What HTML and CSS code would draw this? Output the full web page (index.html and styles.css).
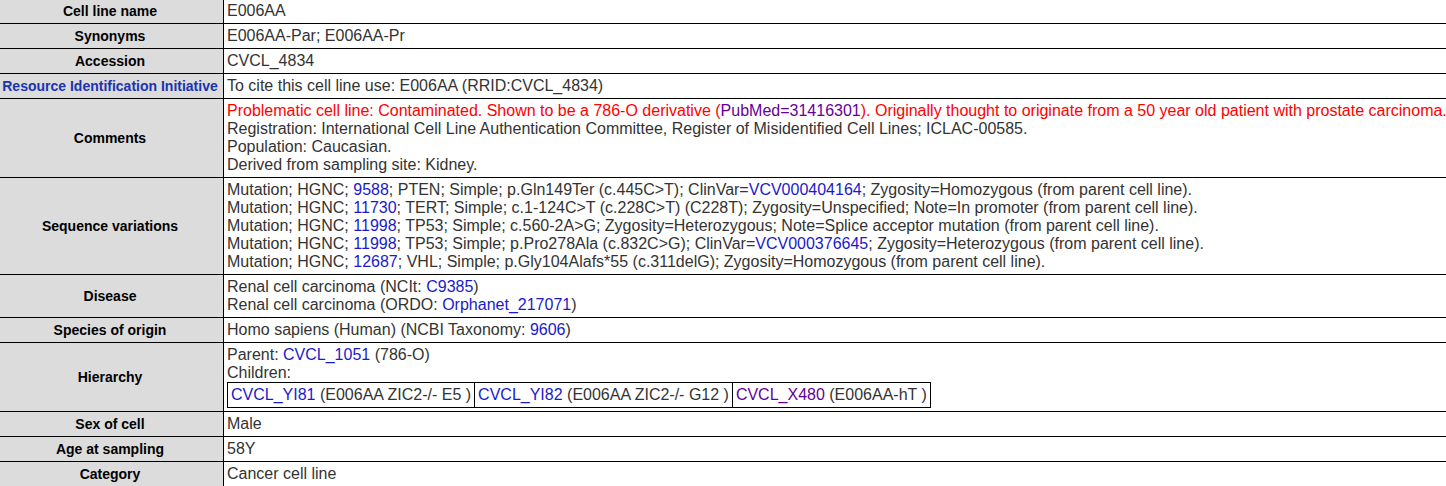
FILE: index.html
```html
<!DOCTYPE html>
<html lang="en">
<head>
  <meta charset="UTF-8">
  <title>E006AA (CVCL_4834)</title>
  <link rel="stylesheet" href="styles.css">
</head>
<body>

  <table class="entry">
    <colgroup>
      <col class="col-label">
      <col>
    </colgroup>
    <tr>
      <th>Cell line name</th>
      <td>E006AA</td>
    </tr>
    <tr>
      <th>Synonyms</th>
      <td>E006AA-Par; E006AA-Pr</td>
    </tr>
    <tr>
      <th>Accession</th>
      <td>CVCL_4834</td>
    </tr>
    <tr>
      <th><a href="#">Resource Identification Initiative</a></th>
      <td>To cite this cell line use: E006AA (RRID:CVCL_4834)</td>
    </tr>
    <tr>
      <th>Comments</th>
      <td>
        <span class="problem">Problematic cell line: Contaminated. Shown to be a 786-O derivative (<a class="visited" href="#">PubMed=31416301</a>). Originally thought to originate from a 50 year old patient with prostate carcinoma.</span><br>
        Registration: International Cell Line Authentication Committee, Register of Misidentified Cell Lines; ICLAC-00585.<br>
        Population: Caucasian.<br>
        Derived from sampling site: Kidney.
      </td>
    </tr>
    <tr>
      <th>Sequence variations</th>
      <td>
        Mutation; HGNC; <a href="#">9588</a>; PTEN; Simple; p.Gln149Ter (c.445C&gt;T); ClinVar=<a href="#">VCV000404164</a>; Zygosity=Homozygous (from parent cell line).<br>
        Mutation; HGNC; <a href="#">11730</a>; TERT; Simple; c.1-124C&gt;T (c.228C&gt;T) (C228T); Zygosity=Unspecified; Note=In promoter (from parent cell line).<br>
        Mutation; HGNC; <a href="#">11998</a>; TP53; Simple; c.560-2A&gt;G; Zygosity=Heterozygous; Note=Splice acceptor mutation (from parent cell line).<br>
        Mutation; HGNC; <a href="#">11998</a>; TP53; Simple; p.Pro278Ala (c.832C&gt;G); ClinVar=<a href="#">VCV000376645</a>; Zygosity=Heterozygous (from parent cell line).<br>
        Mutation; HGNC; <a href="#">12687</a>; VHL; Simple; p.Gly104Alafs*55 (c.311delG); Zygosity=Homozygous (from parent cell line).
      </td>
    </tr>
    <tr>
      <th>Disease</th>
      <td>
        Renal cell carcinoma (NCIt: <a href="#">C9385</a>)<br>
        Renal cell carcinoma (ORDO: <a href="#">Orphanet_217071</a>)
      </td>
    </tr>
    <tr>
      <th>Species of origin</th>
      <td>Homo sapiens (Human) (NCBI Taxonomy: <a href="#">9606</a>)</td>
    </tr>
    <tr>
      <th>Hierarchy</th>
      <td>
        Parent: <a href="#">CVCL_1051</a> (786-O)<br>
        Children:
        <table class="children">
          <tr>
            <td><a href="#">CVCL_YI81</a> (E006AA ZIC2-/- E5 )</td>
            <td><a href="#">CVCL_YI82</a> (E006AA ZIC2-/- G12 )</td>
            <td><a class="visited" href="#">CVCL_X480</a> (E006AA-hT )</td>
          </tr>
        </table>
      </td>
    </tr>
    <tr>
      <th>Sex of cell</th>
      <td>Male</td>
    </tr>
    <tr>
      <th>Age at sampling</th>
      <td>58Y</td>
    </tr>
    <tr>
      <th>Category</th>
      <td>Cancer cell line</td>
    </tr>
  </table>

</body>
</html>
```

FILE: styles.css
```css
body {
  font-family: 'Liberation Sans', Arial, sans-serif;
  background: #fff;
  margin: 0;
  overflow: hidden;
}

a {
  color: #1a1acc;
  text-decoration: none;
}

a.visited {
  color: #660099;
}

.entry {
  border-collapse: collapse;
  table-layout: fixed;
  width: 1500px;
  margin: -2px 0 0 -4px;
}

.col-label {
  width: 227px;
}

.entry th,
.entry td {
  border: 1px solid #000;
  padding: 3px;
  line-height: 18px;
}

.entry th {
  background: #dcdcdc;
  color: #000;
  font-size: 14px;
  font-weight: bold;
  text-align: center;
  vertical-align: middle;
  white-space: nowrap;
}

.entry th a {
  color: #1a33b3;
}

.entry td {
  color: #333;
  font-size: 16px;
  text-align: left;
  vertical-align: top;
  white-space: nowrap;
}

.problem {
  color: #f00;
}

.children {
  border-collapse: collapse;
}

.children td {
  border: 1px solid #000;
  padding: 3px;
  line-height: 18px;
}
```
